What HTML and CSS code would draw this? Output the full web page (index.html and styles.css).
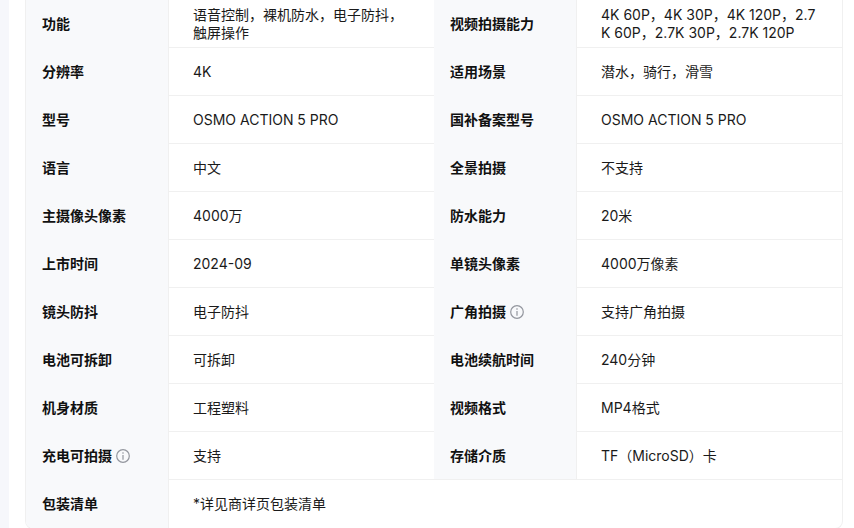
FILE: index.html
```html
<!DOCTYPE html>
<html lang="zh-CN">
<head>
<meta charset="utf-8">
<title>规格参数</title>
<link rel="stylesheet" href="styles.css">
</head>
<body>
<div class="page">
  <div class="strip"></div>
  <div class="specs">
    <div class="label">功能</div><div class="value">语音控制，裸机防水，电子防抖，触屏操作</div>
    <div class="label">视频拍摄能力</div><div class="value">4K 60P，4K 30P，4K 120P，2.7K 60P，2.7K 30P，2.7K 120P</div>
    <div class="label">分辨率</div><div class="value">4K</div>
    <div class="label">适用场景</div><div class="value">潜水，骑行，滑雪</div>
    <div class="label">型号</div><div class="value">OSMO ACTION 5 PRO</div>
    <div class="label">国补备案型号</div><div class="value">OSMO ACTION 5 PRO</div>
    <div class="label">语言</div><div class="value">中文</div>
    <div class="label">全景拍摄</div><div class="value">不支持</div>
    <div class="label">主摄像头像素</div><div class="value">4000万</div>
    <div class="label">防水能力</div><div class="value">20米</div>
    <div class="label">上市时间</div><div class="value">2024-09</div>
    <div class="label">单镜头像素</div><div class="value">4000万像素</div>
    <div class="label">镜头防抖</div><div class="value">电子防抖</div>
    <div class="label">广角拍摄<svg class="info" viewBox="0 0 14 14"><circle cx="7" cy="7" r="6.3"/><path d="M7 6V10.8M7 3.2V4.8"/></svg></div><div class="value">支持广角拍摄</div>
    <div class="label">电池可拆卸</div><div class="value">可拆卸</div>
    <div class="label">电池续航时间</div><div class="value">240分钟</div>
    <div class="label">机身材质</div><div class="value">工程塑料</div>
    <div class="label">视频格式</div><div class="value">MP4格式</div>
    <div class="label">充电可拍摄<svg class="info" viewBox="0 0 14 14"><circle cx="7" cy="7" r="6.3"/><path d="M7 6V10.8M7 3.2V4.8"/></svg></div><div class="value">支持</div>
    <div class="label label--ruled">存储介质</div><div class="value">TF（MicroSD）卡</div>
    <div class="label">包装清单</div><div class="value value--wide">*详见商详页包装清单</div>
  </div>
</div>
</body>
</html>
```

FILE: styles.css
```css
html, body {
  margin: 0;
  padding: 0;
  background: #fff;
  overflow: hidden;
}

.page {
  display: flex;
  width: 854px;
  height: 528px;
  overflow: hidden;
  font-family: Inter, "Noto Sans CJK SC", sans-serif;
  font-size: 14px;
  color: #1a1a1a;
}

.strip {
  width: 9px;
  flex: none;
  background: #f6f7fb;
}

.specs {
  display: grid;
  grid-template-columns: 143px 265px 143px 265px;
  grid-auto-rows: 48px;
  align-content: start;
  flex: none;
  margin-left: 16px;
  height: 528px;
  border-left: 1px solid #f0f0f0;
  border-right: 1px solid #f0f0f0;
  border-bottom: 1px solid #f0f0f0;
  border-radius: 0 0 8px 8px;
  overflow: hidden;
}

.label {
  display: flex;
  align-items: center;
  gap: 4px;
  box-sizing: border-box;
  padding-left: 16px;
  background: #f8f9fb;
  border-right: 1px solid #f0f0f0;
  font-size: 14px;
  font-weight: 700;
  line-height: 18px;
  color: #111;
}

.label--ruled {
  border-bottom: 1px solid #f0f0f0;
}

.value {
  display: flex;
  align-items: center;
  box-sizing: border-box;
  padding: 0 24px;
  border-bottom: 1px solid #f0f0f0;
  line-height: 18px;
  word-break: break-all;
  font-size: 14px;
}

.value--wide {
  grid-column: span 3;
  border-bottom: 0;
}

.info {
  width: 14px;
  height: 14px;
  flex: none;
  fill: none;
  stroke: #93969e;
  stroke-width: 1.2;
}
```
